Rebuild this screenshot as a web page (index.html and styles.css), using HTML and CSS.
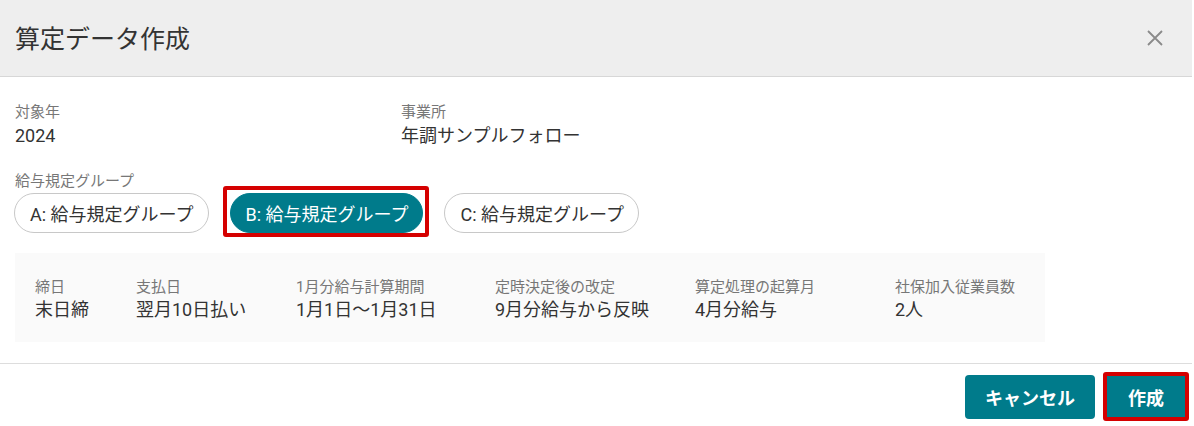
FILE: index.html
```html
<!DOCTYPE html>
<html lang="ja">

<head>
    <meta charset="UTF-8">
    <meta name="viewport" content="width=device-width, initial-scale=1.0">
    <title>算定データ作成</title>
    <link rel="stylesheet" href="styles.css">
</head>

<body>
    <div class="dialog">
        <div class="header">
            <div class="title">算定データ作成</div>
            <button class="close" aria-label="閉じる">
                <svg width="16" height="16" viewBox="0 0 16 16">
                    <path d="M1 1 L15 15 M15 1 L1 15" stroke="#8a8a8a" stroke-width="1.8" fill="none" />
                </svg>
            </button>
        </div>

        <div class="content">
            <div class="fields">
                <div class="field year">
                    <div class="label">対象年</div>
                    <div class="value">2024</div>
                </div>
                <div class="field">
                    <div class="label">事業所</div>
                    <div class="value">年調サンプルフォロー</div>
                </div>
            </div>

            <div class="label group-label">給与規定グループ</div>
            <div class="chips">
                <button class="chip">A: 給与規定グループ</button>
                <span class="mark mark-chip">
                    <button class="chip selected">B: 給与規定グループ</button>
                </span>
                <button class="chip">C: 給与規定グループ</button>
            </div>

            <div class="info">
                <div class="info-item">
                    <div class="label">締日</div>
                    <div class="value">末日締</div>
                </div>
                <div class="info-item">
                    <div class="label">支払日</div>
                    <div class="value">翌月10日払い</div>
                </div>
                <div class="info-item">
                    <div class="label">1月分給与計算期間</div>
                    <div class="value">1月1日～1月31日</div>
                </div>
                <div class="info-item">
                    <div class="label">定時決定後の改定</div>
                    <div class="value">9月分給与から反映</div>
                </div>
                <div class="info-item">
                    <div class="label">算定処理の起算月</div>
                    <div class="value">4月分給与</div>
                </div>
                <div class="info-item">
                    <div class="label">社保加入従業員数</div>
                    <div class="value">2人</div>
                </div>
            </div>
        </div>

        <div class="footer">
            <button class="btn">キャンセル</button>
            <span class="mark mark-btn">
                <button class="btn btn-create">作成</button>
            </span>
        </div>
    </div>
</body>

</html>
```

FILE: styles.css
```css
body {
    margin: 0px;
    padding: 0px;
    background-color: white;
    font-family: Roboto, "Noto Sans CJK JP", sans-serif;
    color: #333333;
}

button {
    font-family: inherit;
    cursor: pointer;
}

.dialog {
    width: 1192px;
}

.header {
    height: 76px;
    background-color: #eeeeee;
    border-bottom: 1px solid #d7d7d7;
    display: flex;
    align-items: center;
    justify-content: space-between;
    padding: 0px 29px 0px 15px;
}

.title {
    font-family: "Noto Sans CJK JP", sans-serif;
    font-size: 25px;
    color: #333333;
    line-height: 32px;
    margin-top: -3px;
}

.close {
    border: none;
    background: none;
    padding: 0px;
    width: 16px;
    height: 16px;
    display: flex;
}

.content {
    padding: 24px 15px 21px 15px;
    border-bottom: 1px solid #dddddd;
}

.fields {
    display: flex;
}

.field.year {
    width: 386px;
}

.label {
    font-size: 15px;
    line-height: 22px;
    color: #777777;
}

.value {
    font-size: 18px;
    line-height: 26px;
    color: #333333;
}

.group-label {
    margin-top: 21px;
}

.chips {
    display: flex;
    align-items: center;
    gap: 21px;
    margin-top: 1px;
    margin-left: -1px;
}

.chip {
    height: 40px;
    padding: 0px 14px 0px 15px;
    border: 1px solid #c8c8c8;
    border-radius: 20px;
    background-color: white;
    font-size: 18px;
    color: #333333;
    white-space: nowrap;
}

.chip.selected {
    background-color: #007b8b;
    border-color: #007b8b;
    color: white;
}

.mark {
    display: inline-flex;
    border: 4px solid #d50000;
    border-radius: 3px;
}

.mark-chip {
    padding: 3px 2px 0px 3px;
    margin: -7px -6px -4px -7px;
}

.info {
    margin-top: 20px;
    width: 990px;
    background-color: #fafafa;
    padding: 23px 20px 20px 20px;
    display: grid;
    grid-template-columns: 101px 160px 199px 200px 200px auto;
}

.info .value {
    line-height: 24px;
}

.footer {
    display: flex;
    justify-content: flex-end;
    align-items: center;
    gap: 8px;
    padding: 8px 3px 0px 0px;
}

.btn {
    height: 44px;
    padding: 0px 20px;
    border: none;
    border-radius: 4px;
    background-color: #007b8b;
    color: white;
    font-size: 18px;
    font-weight: 700;
    white-space: nowrap;
}

.btn-create {
    height: 41px;
    width: 78px;
    padding: 0px;
    border-radius: 0px;
}
```
